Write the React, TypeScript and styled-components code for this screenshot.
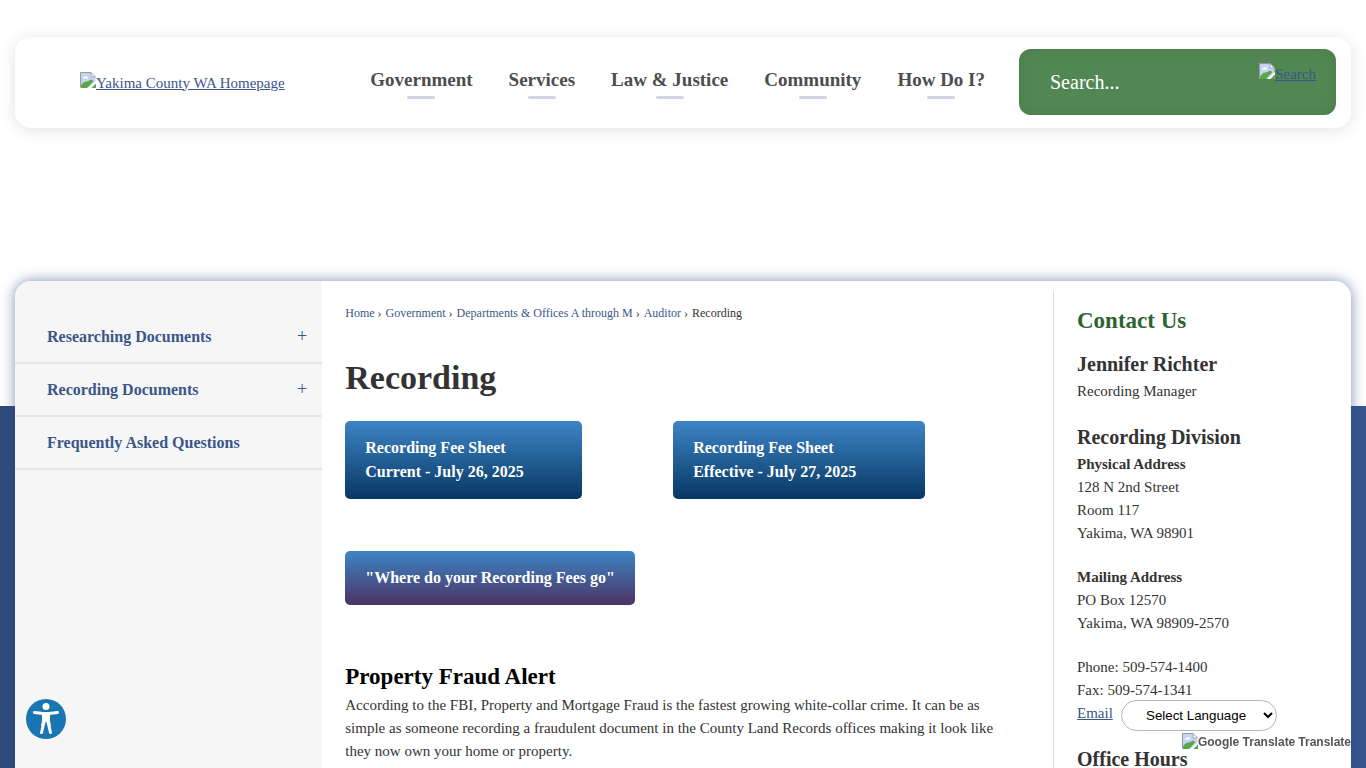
import React from "react";
import styled, { createGlobalStyle } from "styled-components";

const GlobalStyle = createGlobalStyle`
  * { box-sizing: border-box; }
  html, body { margin: 0; }
  body {
    background: #fff;
    color: #333;
    font-family: "Liberation Serif", "Times New Roman", serif;
    font-size: 15px;
    line-height: 23px;
  }
  h1, h2, h3, p, ul, ol { margin: 0; padding: 0; }
  ul, ol { list-style: none; }
  a { color: #3b5689; }
`;

const Page = styled.div`
  display: flex;
  flex-direction: column;
  min-height: 100vh;
  padding: 37px 15px 0;
  background: linear-gradient(90deg, #2f4b7c, #37558e) 0 406px / 100% 100% no-repeat;
`;

const Header = styled.header`
  display: flex;
  align-items: center;
  padding: 12px 15px 13px 65px;
  border-radius: 16px;
  background: #fff;
  box-shadow: 0 2px 16px rgba(40, 40, 70, 0.13);
`;

const LogoLink = styled.a`
  display: flex;
  flex: 1;
  padding-top: 2px;
`;

const Nav = styled.nav`
  display: flex;
  gap: 36px;
  margin-right: 34px;
  padding-top: 4px;
`;

const NavLink = styled.a`
  display: flex;
  flex-direction: column;
  align-items: center;
  gap: 5px;
  color: #4d4d4d;
  font-size: 19px;
  font-weight: bold;
  line-height: 22px;
  text-decoration: none;
  &::after {
    content: "";
    width: 28px;
    height: 3px;
    border-radius: 2px;
    background: #d1d4e4;
  }
`;

const SearchBox = styled.form`
  display: flex;
  align-items: flex-start;
  width: 317px;
  height: 66px;
  padding: 0 20px 0 31px;
  border-radius: 12px;
  background: #528753;
  box-shadow: inset 0 0 8px 2px #45783f66;
`;

const SearchInput = styled.input`
  flex: 1;
  min-width: 0;
  height: 66px;
  padding: 0;
  border: 0;
  outline: 0;
  background: transparent;
  color: #fff;
  font-family: inherit;
  font-size: 20px;
  &::placeholder { color: #fff; opacity: 1; }
`;

const SearchButton = styled.button`
  display: flex;
  padding: 14px 0 0;
  border: 0;
  background: none;
  color: #35588a;
  font-family: inherit;
  font-size: 15px;
  line-height: 23px;
  text-decoration: underline;
`;

const Panel = styled.div`
  display: flex;
  flex: 1;
  margin-top: 153px;
  border-radius: 16px 16px 0 0;
  background: #fff;
  box-shadow: 0 0 14px rgba(40, 70, 130, 0.6);
`;

const Sidebar = styled.nav`
  width: 23%;
  padding-top: 30px;
  border-radius: 16px 0 0 0;
  background: #f6f6f6;
`;

const SideItem = styled.li`
  display: flex;
  align-items: center;
  justify-content: space-between;
  height: 53px;
  padding: 0 15px 0 32px;
  border-bottom: 2px solid #e6e6e6;
`;

const SideLink = styled.a`
  font-size: 16px;
  font-weight: bold;
  text-decoration: none;
`;

const Expand = styled.button`
  padding: 0 0 2px;
  border: 0;
  background: none;
  color: #3b5689;
  font-family: inherit;
  font-size: 18px;
  line-height: 22px;
`;

const Main = styled.main`
  flex: 1;
  padding: 21px 52px 0 23px;
`;

const Crumbs = styled.ol`
  display: flex;
  font-size: 12px;
  a { text-decoration: none; }
  li + li::before { content: "›"; padding: 0 4px 0 3px; }
`;

const Title = styled.h1`
  margin: 32px 0 22px;
  font-size: 34px;
  line-height: 42px;
`;

const FeeGrid = styled.div`
  display: grid;
  grid-template-columns: 1fr 1fr;
  row-gap: 52px;
  justify-items: start;
`;

const FeeButton = styled.a<{ $end: string; $width: number }>`
  width: ${(p) => p.$width}px;
  padding: 15px 20px;
  border-radius: 5px;
  background: linear-gradient(#3d85c6, ${(p) => p.$end});
  color: #fff;
  font-size: 16px;
  font-weight: bold;
  line-height: 24px;
  text-decoration: none;
  white-space: nowrap;
`;

const AlertTitle = styled.h2`
  margin: 57px 0 3px;
  color: #000;
  font-size: 23px;
  line-height: 29px;
`;

const Contact = styled.aside`
  width: 298px;
  margin-top: 10px;
  padding: 16px 0 0 23px;
  border-left: 1px solid #d9d9d9;
`;

const ContactTitle = styled.h2`
  margin-bottom: 16px;
  color: #2c642f;
  font-size: 23px;
  line-height: 28px;
`;

const ContactName = styled.h3`
  margin-bottom: 3px;
  font-size: 20px;
  line-height: 26px;
`;

const ContactBlock = styled.div`
  margin-bottom: 21px;
`;

const Line = styled.p<{ $bold?: boolean }>`
  font-weight: ${(p) => (p.$bold ? "bold" : "normal")};
`;

const AccessButton = styled.button`
  position: fixed;
  left: 26px;
  bottom: 29px;
  display: flex;
  padding: 0;
  border: 0;
  border-radius: 50%;
  background: none;
`;

const Translate = styled.div`
  position: fixed;
  right: 15px;
  bottom: 16px;
  display: flex;
  flex-direction: column;
  align-items: flex-end;
  gap: 2px;
  font-family: "Liberation Sans", Arial, sans-serif;
`;

const LanguageSelect = styled.select`
  width: 156px;
  height: 31px;
  margin-right: 74px;
  padding: 0 0 0 20px;
  border: 1px solid #b5b5b5;
  border-radius: 16px;
  background: #fff;
  color: #000;
  font-family: inherit;
`;

const TranslateLink = styled.a`
  display: flex;
  gap: 3px;
  color: #555;
  font-size: 12px;
  font-weight: bold;
  line-height: 19px;
  text-decoration: none;
  span { display: flex; }
`;

const MissingImage = () => (
  <svg width="16" height="16" viewBox="0 0 16 16" aria-hidden="true">
    <path d="M0.5 15.5V0.5H11L15.5 5V15.5Z" fill="#c6d3f5" />
    <path d="M0.5 15.5V0.5H11" fill="none" stroke="#9a9a9a" />
    <path d="M11 0.5V5H15.5Z" fill="#fff" stroke="#a5a5a5" />
    <path d="M3 6.5a2 2 0 0 1 2-2 2 2 0 0 1 3 2Z" fill="#fff" />
    <path d="M1 16V13.500C3 10.500 5 9 7.500 9.500L11 7.500 13.500 9 7 16Z" fill="#58a845" />
    <path d="M8 16L16 9V11.500L11.500 16Z" fill="#fff" />
    <path d="M11.500 16H16V11.500Z" fill="#58a845" />
  </svg>
);

const menu = ["Government", "Services", "Law & Justice", "Community", "How Do I?"];
const crumbs = ["Home", "Government", "Departments & Offices A through M", "Auditor"];
const sections = [
  { label: "Researching Documents", expandable: true },
  { label: "Recording Documents", expandable: true },
  { label: "Frequently Asked Questions", expandable: false },
];

export default function App() {
  return (
    <Page>
      <GlobalStyle />
      <Header>
        <LogoLink href="#">
          <MissingImage />
          Yakima County WA Homepage
        </LogoLink>
        <Nav aria-label="Main">
          {menu.map((label) => (
            <NavLink href="#" key={label}>{label}</NavLink>
          ))}
        </Nav>
        <SearchBox role="search">
          <SearchInput type="text" placeholder="Search..." aria-label="Search" />
          <SearchButton type="button">
            <MissingImage />
            Search
          </SearchButton>
        </SearchBox>
      </Header>

      <Panel>
        <Sidebar aria-label="Section">
          <ul>
            {sections.map(({ label, expandable }) => (
              <SideItem key={label}>
                <SideLink href="#">{label}</SideLink>
                {expandable && <Expand aria-label={`Expand ${label}`}>+</Expand>}
              </SideItem>
            ))}
          </ul>
        </Sidebar>

        <Main>
          <Crumbs>
            {crumbs.map((label) => (
              <li key={label}><a href="#">{label}</a></li>
            ))}
            <li>Recording</li>
          </Crumbs>
          <Title>Recording</Title>
          <FeeGrid>
            <FeeButton href="#" $end="#073763" $width={237}>
              Recording Fee Sheet<br />Current - July 26, 2025
            </FeeButton>
            <FeeButton href="#" $end="#073763" $width={252}>
              Recording Fee Sheet<br />Effective - July 27, 2025
            </FeeButton>
            <FeeButton href="#" $end="#4c3463" $width={290}>
              "Where do your Recording Fees go"
            </FeeButton>
          </FeeGrid>
          <AlertTitle>Property Fraud Alert</AlertTitle>
          <p>
            According to the FBI, Property and Mortgage Fraud is the fastest growing white-collar
            crime. It can be as simple as someone recording a fraudulent document in the County
            Land Records offices making it look like they now own your home or property.
          </p>
        </Main>

        <Contact>
          <ContactTitle>Contact Us</ContactTitle>
          <ContactBlock>
            <ContactName>Jennifer Richter</ContactName>
            <Line>Recording Manager</Line>
          </ContactBlock>
          <ContactBlock>
            <ContactName>Recording Division</ContactName>
            <Line $bold>Physical Address</Line>
            <Line>128 N 2nd Street</Line>
            <Line>Room 117</Line>
            <Line>Yakima, WA 98901</Line>
          </ContactBlock>
          <ContactBlock>
            <Line $bold>Mailing Address</Line>
            <Line>PO Box 12570</Line>
            <Line>Yakima, WA 98909-2570</Line>
          </ContactBlock>
          <ContactBlock>
            <Line>Phone: 509-574-1400</Line>
            <Line>Fax: 509-574-1341</Line>
            <Line><a href="#">Email</a></Line>
          </ContactBlock>
          <ContactName>Office Hours</ContactName>
        </Contact>
      </Panel>

      <AccessButton aria-label="Accessibility options">
        <svg width="40" height="40" viewBox="0 0 40 40">
          <circle cx="20" cy="20" r="20" fill="#1a75b3" />
          <circle cx="20" cy="7.500" r="3.500" fill="#fff" />
          <path
            d="M8.500 13.500L17 14.500H23L31.500 13.500M18 15.500V23L15.500 33.500M22 15.500V23L24.500 33.500"
            fill="none"
            stroke="#fff"
            strokeWidth="3"
            strokeLinecap="round"
            strokeLinejoin="round"
          />
          <path d="M16 14H24V22L25 27H22.500L20 22 17.500 27H15L16 22Z" fill="#fff" />
        </svg>
      </AccessButton>

      <Translate>
        <LanguageSelect aria-label="Language">
          <option>Select Language</option>
        </LanguageSelect>
        <TranslateLink href="#">
          <span><MissingImage />Google Translate</span>
          Translate
        </TranslateLink>
      </Translate>
    </Page>
  );
}
